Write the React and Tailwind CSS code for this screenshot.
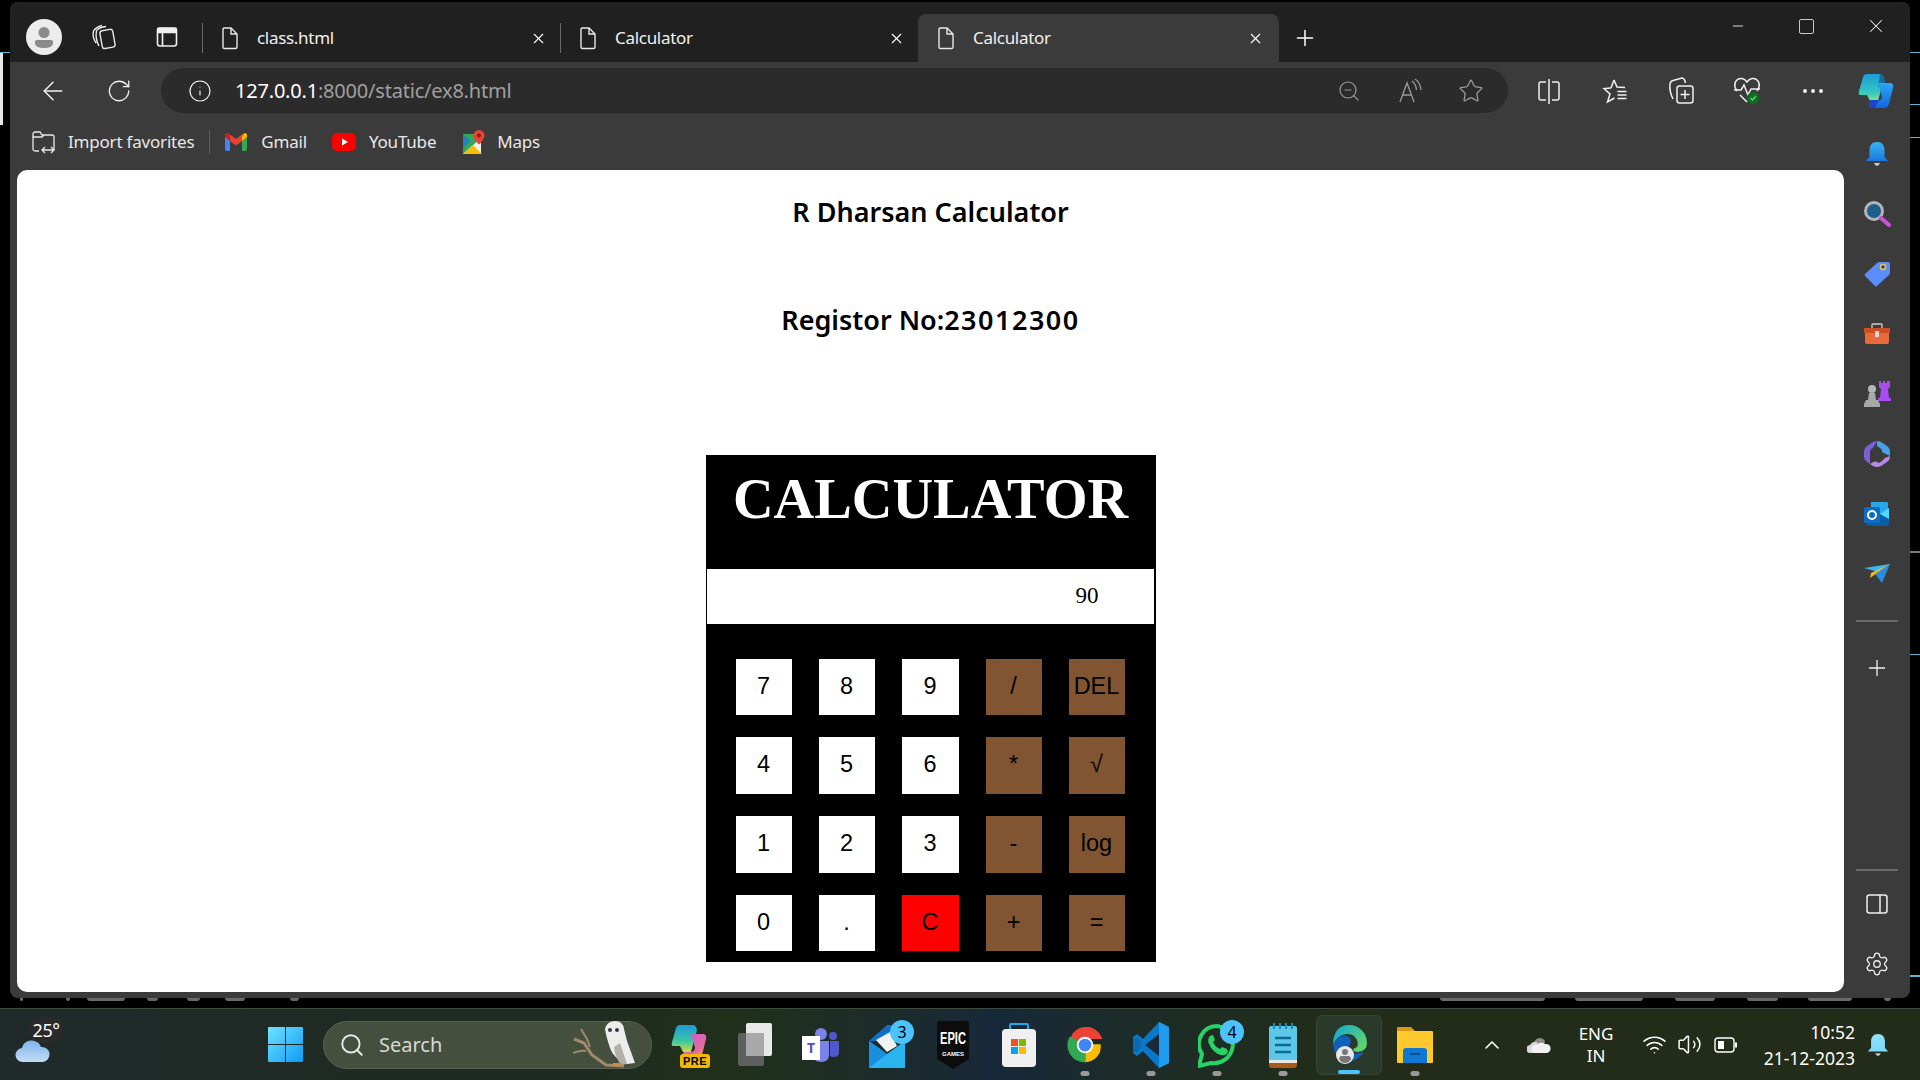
import { ArrowLeft, RotateCw, Info, ZoomOut, Star, Plus, X, Minus, ChevronUp, Wifi, Volume2, Settings, Search } from 'lucide-react';

const keys = [
  ['7', 'n'], ['8', 'n'], ['9', 'n'], ['/', 'o'], ['DEL', 'o'],
  ['4', 'n'], ['5', 'n'], ['6', 'n'], ['*', 'o'], ['√', 'o'],
  ['1', 'n'], ['2', 'n'], ['3', 'n'], ['-', 'o'], ['log', 'o'],
  ['0', 'n'], ['.', 'n'], ['C', 'r'], ['+', 'o'], ['=', 'o'],
];

const keyColors = {
  n: 'bg-white',
  o: 'bg-[#815532]',
  r: 'bg-[#ff0000]',
};

// bits of the window behind the browser that peek out under it: [gap before, width]
const statusMarks = [
  [20, 3], [43, 4], [17, 38], [22, 11], [29, 13], [25, 20], [45, 9],
  [1141, 105], [30, 68], [32, 40], [32, 31], [30, 44], [32, 7],
];

function PageIcon() {
  return (
    <svg width="18" height="24" viewBox="0 0 18 24" fill="none" stroke="#e8e8e8" strokeWidth="1.4">
      <path d="M3 2h7l6 6v13a1.5 1.5 0 0 1-1.5 1.5h-11A1.5 1.5 0 0 1 2 21V3.5A1.5 1.5 0 0 1 3 2zM10 2v6h6" />
    </svg>
  );
}

function Tab({ title, active, width, divider }) {
  return (
    <div className={`flex items-center h-12 pl-[19px] shrink-0 rounded-t-lg relative ${active ? 'bg-[#3b3b3b] pr-[15px]' : 'pr-[13px]'}`} style={{ width }}>
      {divider && <div className="absolute left-0 top-[9px] h-[30px] w-px bg-[#6a6a6a]" />}
      <PageIcon />
      <span className="ml-[18px] text-[17px] text-[#f0f0f0] flex-1 tracking-[-0.3px]">{title}</span>
      <X size={17} strokeWidth={1.5} color="#fff" />
    </div>
  );
}

function Avatar() {
  return (
    <svg width="36" height="36" viewBox="0 0 36 36">
      <circle cx="18" cy="18" r="18" fill="#ececec" />
      <circle cx="18" cy="13.5" r="5.5" fill="#8a8a8a" />
      <path d="M9 22.5q0-1.5 2-1.5h14q2 0 2 1.5v2q-1 4.5-9 4.5t-9-4.5z" fill="#8a8a8a" />
    </svg>
  );
}

function Workspaces() {
  return (
    <svg width="26" height="26" viewBox="0 0 26 26" fill="none" stroke="#e8e8e8" strokeWidth="1.4">
      <rect x="10" y="6" width="13" height="18" rx="2.5" transform="rotate(-10 16 15)" />
      <path d="M8 22Q4 15 5.5 6.5 9 3 15 2.5M5 19Q1 13 2.5 7 5 3 11 1.5" />
    </svg>
  );
}

function VerticalTabs() {
  return (
    <svg width="22" height="22" viewBox="0 0 22 22" fill="none" stroke="#f0f0f0" strokeWidth="1.6">
      <rect x="1.5" y="2" width="19" height="18" rx="2.5" />
      <path d="M6.5 6.5V20" />
      <path d="M2 2.5h18v4H2z" fill="#f0f0f0" />
    </svg>
  );
}

function SplitIcon() {
  return (
    <svg width="24" height="26" viewBox="0 0 24 26" fill="none" stroke="#f0f0f0" strokeWidth="1.5">
      <path d="M9 4H4a2 2 0 0 0-2 2v14a2 2 0 0 0 2 2h5M15 4h5a2 2 0 0 1 2 2v14a2 2 0 0 1-2 2h-5M12 1v25" />
    </svg>
  );
}

function FavList() {
  return (
    <svg width="26" height="26" viewBox="0 0 26 26" fill="none" stroke="#f0f0f0" strokeWidth="1.5">
      <path d="M12 2l3 7 8 .5M9 10l-7 .5 6 5.5-2.5 8 7-4M15.5 13.5h9M15.5 17h9M15.5 20.5h9" />
      <path d="M12 2L9 10" />
    </svg>
  );
}

function Collections() {
  return (
    <svg width="26" height="28" viewBox="0 0 26 28" fill="none" stroke="#f0f0f0" strokeWidth="1.5">
      <path d="M5 22Q1 14 2 7q.5-3 3-3.500L14 1q2 0 3 3l.5 2" />
      <rect x="9" y="9" width="16" height="17" rx="2.500" />
      <path d="M17 13v9M12.500 17.500h9" />
    </svg>
  );
}

function Health() {
  return (
    <svg width="28" height="30" viewBox="0 0 28 30" fill="none">
      <path d="M4 15Q1 11 2 7q2-5 7-4.500 3 .5 5 3.500 2-3 5-3.500 5-.5 7 4.500 1 4-2 8" stroke="#f0f0f0" strokeWidth="1.5" />
      <path d="M1 14h7l3-5 4 10 3-6h9M7 19l7 7" stroke="#f0f0f0" strokeWidth="1.5" />
      <circle cx="20" cy="22" r="6" fill="#0c6f1f" />
      <path d="M17.500 22l2 2 3.500-4" stroke="#6fcf7f" strokeWidth="1.2" />
    </svg>
  );
}

function Copilot({ size = 36 }) {
  return (
    <svg width={size} height={size} viewBox="0 0 36 36">
      <defs>
        <linearGradient id="cpA" x1="0" y1="0" x2="0" y2="1">
          <stop offset="0" stopColor="#1c9bd8" />
          <stop offset="0.7" stopColor="#35c9c0" />
          <stop offset="1" stopColor="#8ee08a" />
        </linearGradient>
        <linearGradient id="cpB" x1="0" y1="0" x2="0" y2="1">
          <stop offset="0" stopColor="#2aa8f2" />
          <stop offset="1" stopColor="#1464e0" />
        </linearGradient>
      </defs>
      <path d="M9 1h13q3 0 4 5l-6 22H12l-3-6H2q-2 0-1-4l4-14q1-3 4-3z" fill="url(#cpA)" />
      <path d="M22 1q3 0 4 5l2 5-8 3z" fill="#11719e" />
      <path d="M20 10h13q3 1 2 5l-4 16q-1 3-4 4H14q-3-1-3-4l2-3h7q3 0 4-4z" fill="url(#cpB)" />
      <path d="M12 27h9l-4 8h-3q-3-1-3-3z" fill="#1846c8" />
    </svg>
  );
}

function ImportFav() {
  return (
    <svg width="24" height="24" viewBox="0 0 24 24" fill="none" stroke="#e8e8e8" strokeWidth="1.3">
      <path d="M7 21H3a2 2 0 0 1-2-2V4a2 2 0 0 1 2-2h5l2 3h10a2 2 0 0 1 2 2v12a2 2 0 0 1-1 1.500M1 7h9l2-2" />
      <path d="M10 20h12M13 17l-3 3 3 3M19 17l3 3-3 3" />
    </svg>
  );
}

function Gmail() {
  return (
    <svg width="22" height="18" viewBox="0 0 22 18">
      <path d="M0 3v13a2 2 0 0 0 2 2h3V8z" fill="#4285f4" />
      <path d="M22 3v13a2 2 0 0 1-2 2h-3V8z" fill="#34a853" />
      <path d="M0 3q0-3 3-3l8 6 8-6q3 0 3 3v1l-5 4-6 4.500L5 8 0 4z" fill="#ea4335" />
      <path d="M17 3l3-3q2 0 2 3v1l-5 4z" fill="#fbbc04" />
      <path d="M0 4V3q0-3 3-3l2 1.500V8z" fill="#c5221f" />
    </svg>
  );
}

function YouTube() {
  return (
    <svg width="24" height="18" viewBox="0 0 24 18">
      <rect width="24" height="18" rx="5" fill="#ff0000" />
      <path d="M10 5.500l6 3.500-6 3.500z" fill="#fff" />
    </svg>
  );
}

function Maps() {
  return (
    <svg width="22" height="24" viewBox="0 0 22 24">
      <path d="M0 4h18v20H0z" fill="#34a853" />
      <path d="M0 24L18 8v16z" fill="#f2f2f2" />
      <path d="M0 24L10 15l9 9z" fill="#fbbc04" />
      <path d="M0 18L8 11 0 4z" fill="#1a73e8" opacity="0.7" />
      <path d="M16 0a5.500 5.500 0 0 1 5.500 5.500c0 4-5.500 9-5.500 9s-5.500-5-5.500-9A5.500 5.500 0 0 1 16 0z" fill="#ea4335" />
      <circle cx="16" cy="5.500" r="2" fill="#8c1a12" />
    </svg>
  );
}

// edge sidebar icons
function SideBell({ size = 26, top = '#37b5f2', bottom = '#1a78e0' }) {
  return (
    <svg width={size} height={size} viewBox="0 0 26 26">
      <defs>
        <linearGradient id={`bell${size}`} x1="0" y1="0" x2="0" y2="1">
          <stop offset="0" stopColor={top} />
          <stop offset="1" stopColor={bottom} />
        </linearGradient>
      </defs>
      <path d="M13 1c5 0 7.500 3.500 7.500 8v7l3.500 4H2l3.500-4V9C5.500 4.500 8 1 13 1z" fill={`url(#bell${size})`} />
      <path d="M10 22h6q-1 3-3 3t-3-3z" fill="#c8c8c8" />
    </svg>
  );
}

function SideSearch() {
  return (
    <svg width="28" height="28" viewBox="0 0 28 28" fill="none">
      <circle cx="11" cy="11" r="8.500" fill="#1c5f8e" stroke="#b5b5b5" strokeWidth="3" />
      <path d="M18 18l8 7" stroke="#c94fdc" strokeWidth="4" strokeLinecap="round" />
    </svg>
  );
}

function SideTag() {
  return (
    <svg width="26" height="26" viewBox="0 0 26 26">
      <path d="M15 1h9q2 0 2 2v9q0 1-1 2L13 25q-1 1-2 0L1 15q-1-1 0-2L13 2q1-1 2-1z" fill="#5b8cf7" />
      <circle cx="19" cy="6" r="2.500" fill="#1f3fa8" stroke="#f4c927" strokeWidth="1.500" />
    </svg>
  );
}

function SideTools() {
  return (
    <svg width="28" height="22" viewBox="0 0 28 22">
      <path d="M9 5V2q0-1 1-1h8q1 0 1 1v3" fill="none" stroke="#aaa" strokeWidth="1.800" />
      <path d="M1 5h26v5H1z" fill="#cf4e1f" />
      <path d="M2 10h24v9q0 2-2 2H4q-2 0-2-2z" fill="#e8693a" />
      <rect x="12" y="8" width="4" height="6" fill="#d8d8d8" />
    </svg>
  );
}

function SideGames() {
  return (
    <svg width="28" height="28" viewBox="0 0 28 28">
      <path d="M16 1h2v2h2V1h2v2h2V1h3v6l-2 2 1 9h2v3H15v-3h2l1-9-2-2z" fill="#a84df0" />
      <circle cx="9" cy="9" r="4" fill="#b5b5b5" />
      <path d="M6 13h6l1 7h2l2 4v3H1v-3l2-4h2z" fill="#a8a8a8" />
    </svg>
  );
}

function SideM365() {
  return (
    <svg width="26" height="26" viewBox="0 0 26 26">
      <path d="M13 0q2 0 4 1l6 4q3 2 3 5v5l-8-4v-1q0-2-2-3l-3-2z" fill="#4aa0e6" />
      <path d="M13 0q-2 0-4 1L3 5Q0 7 0 10v6q0 3 3 5l3 2V11q0-3 3-4z" fill="#7a5fd6" />
      <path d="M26 15v1q0 3-3 5l-6 4q-4 2-8 0l-3-2 5-3 4 2 3-2 3-3z" fill="#b58ae6" />
      <path d="M8 12l5-3 5 3v4l-8 5-2-1z" fill="#3b3b3b" />
    </svg>
  );
}

function SideOutlook() {
  return (
    <svg width="26" height="26" viewBox="0 0 26 26">
      <path d="M7 1h16a2 2 0 0 1 1 1v11H7z" fill="#28a8ea" />
      <path d="M3 24V13h22v10a2 2 0 0 1-2 2H5z" fill="#0a5ea8" />
      <path d="M16 13l9-6v11z" fill="#50d9ff" />
      <rect x="0" y="6" width="16" height="16" rx="1.500" fill="#0a6cc2" />
      <circle cx="8" cy="14" r="4" fill="none" stroke="#fff" strokeWidth="2" />
    </svg>
  );
}

function SideSend() {
  return (
    <svg width="28" height="22" viewBox="0 0 28 22">
      <path d="M1 5l26-4-8 9z" fill="#38b6f0" />
      <path d="M8 10l19-9L7 15z" fill="#f2b81c" />
      <path d="M12 11l15-10-8 19z" fill="#2a8ce0" />
    </svg>
  );
}

function SidePanelIcon() {
  return (
    <svg width="22" height="20" viewBox="0 0 22 20" fill="none" stroke="#f0f0f0" strokeWidth="1.500">
      <rect x="1" y="1" width="20" height="18" rx="2.500" />
      <path d="M14 1v18" />
    </svg>
  );
}

function Weather() {
  return (
    <svg width="36" height="28" viewBox="0 0 36 28">
      <defs>
        <linearGradient id="cloud" x1="0" y1="0" x2="0" y2="1">
          <stop offset="0" stopColor="#7db5ee" />
          <stop offset="1" stopColor="#c4dcf6" />
        </linearGradient>
      </defs>
      <path d="M8 27a7 7 0 0 1-1-14 10 10 0 0 1 19-1 7.500 7.500 0 0 1 2 15z" fill="url(#cloud)" />
    </svg>
  );
}

function WinLogo() {
  return (
    <svg width="35" height="35" viewBox="0 0 35 35">
      <defs>
        <linearGradient id="win" x1="0" y1="0" x2="1" y2="1">
          <stop offset="0" stopColor="#6fe3ff" />
          <stop offset="1" stopColor="#0f9bf5" />
        </linearGradient>
      </defs>
      <path d="M1 0h16v17H0V1q0-1 1-1zM18 0h16q1 0 1 1v16H18zM0 18h17v17H1q-1 0-1-1zM18 18h17v16q0 1-1 1H18z" fill="url(#win)" />
    </svg>
  );
}

function Owl() {
  return (
    <svg width="70" height="48" viewBox="0 0 70 48">
      <path d="M1 18l10 4 8 12 14 10 18 1" fill="none" stroke="#a08a6c" strokeWidth="3" />
      <path d="M8 8l6 10 3 8M0 32q8-3 13-2" fill="none" stroke="#a08a6c" strokeWidth="2" />
      <path d="M32 8q2-8 10-8t9 8l3 12 8 22-8 1q-14-6-17-16-4-12-5-19z" fill="#ececec" />
      <path d="M47 22l7 21-6 1q-6-8-7-18z" fill="#b4b0a8" />
      <circle cx="37" cy="9" r="2" fill="#3a3a44" />
      <circle cx="44" cy="9" r="2" fill="#3a3a44" />
      <path d="M40 42h9v3h-9z" fill="#d98a2c" />
    </svg>
  );
}

function CopilotPre() {
  return (
    <div className="relative w-[36px] h-[46px]">
      <svg width="36" height="40" viewBox="0 0 36 36">
        <defs>
          <linearGradient id="preA" x1="0" y1="0" x2="0" y2="1">
            <stop offset="0" stopColor="#1c9bd8" />
            <stop offset="0.6" stopColor="#3cc8a0" />
            <stop offset="1" stopColor="#d8d840" />
          </linearGradient>
          <linearGradient id="preB" x1="0" y1="0" x2="1" y2="1">
            <stop offset="0" stopColor="#c05ad8" />
            <stop offset="0.6" stopColor="#e068a8" />
            <stop offset="1" stopColor="#f2a03c" />
          </linearGradient>
        </defs>
        <path d="M9 1h13q3 0 4 5l-6 22H12l-3-6H2q-2 0-1-4l4-14q1-3 4-3z" fill="url(#preA)" />
        <path d="M20 10h13q3 1 2 5l-4 16q-1 3-4 4H14q-3-1-3-4l2-3h7q3 0 4-4z" fill="url(#preB)" />
      </svg>
      <span className="absolute bottom-0 right-[-3px] bg-[#f5b800] text-black font-bold rounded-[3px] text-[11px] leading-[14px] px-[3px] tracking-[0.5px] font-['Liberation_Sans',sans-serif]">PRE</span>
    </div>
  );
}

function TaskView() {
  return (
    <svg width="36" height="46" viewBox="0 0 36 46">
      <rect x="1" y="11" width="26" height="33" rx="2" fill="#5f5f5f" />
      <rect x="9" y="1" width="26" height="33" rx="2" fill="#e8e8e8" />
      <path d="M9 11h18v23H9z" fill="#a8a8a8" />
    </svg>
  );
}

function Teams() {
  return (
    <svg width="36" height="34" viewBox="0 0 36 34">
      <circle cx="18" cy="6" r="6" fill="#7b83eb" />
      <circle cx="30" cy="8" r="4" fill="#5059c9" />
      <path d="M10 13h16v14q0 7-8 7t-8-7z" fill="#7b83eb" />
      <path d="M27 13h9v11q0 5-5 5-3 0-4-1z" fill="#5059c9" />
    </svg>
  );
}

function Mail() {
  return (
    <svg width="36" height="46" viewBox="0 0 36 46">
      <path d="M0 19L18 3h3q15 6 15 16z" fill="#0f6fc6" />
      <path d="M7 18l14-8 7 14-10 6z" fill="#f1f1f1" />
      <path d="M0 19l18 13 18-13v27H0z" fill="#2bb4f0" />
      <path d="M0 19l18 13-18 14z" fill="#1a8fe0" />
    </svg>
  );
}

function Epic() {
  return (
    <svg width="32" height="48" viewBox="0 0 32 48">
      <path d="M3 0h26q3 0 3 3v35l-16 10L0 38V3q0-3 3-3z" fill="#0c0c0c" />
      <text x="16" y="23" textAnchor="middle" fill="#fff" fontSize="16" fontWeight="700" fontFamily="Liberation Sans" textLength="26" lengthAdjust="spacingAndGlyphs">EPIC</text>
      <text x="16" y="35" textAnchor="middle" fill="#fff" fontSize="6" fontWeight="700" fontFamily="Liberation Sans">GAMES</text>
    </svg>
  );
}

function Store() {
  return (
    <svg width="36" height="46" viewBox="0 0 36 46">
      <path d="M9 7V3q0-1 1-1h16q1 0 1 1v4" fill="none" stroke="#27a5e8" strokeWidth="2" />
      <rect x="1" y="7" width="34" height="38" rx="4" fill="#f0f0f0" />
      <rect x="10" y="17" width="7" height="7" fill="#f25022" />
      <rect x="18" y="17" width="7" height="7" fill="#7fba00" />
      <rect x="10" y="25" width="7" height="7" fill="#00a4ef" />
      <rect x="18" y="25" width="7" height="7" fill="#ffb900" />
    </svg>
  );
}

function Chrome() {
  return (
    <svg width="36" height="36" viewBox="0 0 48 48">
      <path d="M24 24L7 14A20 20 0 0 1 44 14H24z" fill="#ea4335" stroke="#ea4335" strokeWidth="4" />
      <path d="M24 24H44A20 20 0 0 1 24 46z" fill="#fbbc04" stroke="#fbbc04" strokeWidth="2" />
      <path d="M24 24V46A22 22 0 0 1 4 14z" fill="#34a853" stroke="#34a853" strokeWidth="2" />
      <circle cx="24" cy="24" r="11" fill="#fff" />
      <circle cx="24" cy="24" r="8.500" fill="#4285f4" />
    </svg>
  );
}

function VsCode() {
  return (
    <svg width="36" height="46" viewBox="0 0 36 46">
      <path d="M26 0l10 5v36l-10 5L10 29 4 34 0 31v-16l4-3 6 5z" fill="#0a78c8" />
      <path d="M26 0l10 5v36l-10 5z" fill="#1f9cf0" />
      <path d="M26 12v22L12 23z" fill="#1a2a3a" />
      <path d="M0 17l4-2 5 8-5 8-4-2z" fill="#0a6ab0" />
    </svg>
  );
}

function WhatsApp() {
  return (
    <svg width="38" height="46" viewBox="0 0 38 46">
      <path d="M19 4a18 18 0 0 0-15 28L1 44l12-3A18 18 0 1 0 19 4z" fill="none" stroke="#25d366" strokeWidth="4" />
      <path d="M12 14q-3 3-1 8 4 9 12 11 5 1 7-3l-1-3-5-2-2 2q-5-2-7-7l2-2-2-5z" fill="#25d366" />
    </svg>
  );
}

function Notepad() {
  return (
    <svg width="30" height="46" viewBox="0 0 30 46">
      <rect x="1" y="4" width="28" height="38" rx="2" fill="#5cc8e8" />
      <path d="M1 38h28v5q0 3-3 3H4q-3 0-3-3z" fill="#a85a1c" />
      <path d="M1 38h28v3H1z" fill="#e8e8e8" />
      <path d="M7 16h16M7 23h16M7 30h16" stroke="#0c6a92" strokeWidth="2.500" />
      <path d="M6 1v6M12 1v6M18 1v6M24 1v6" stroke="#1b8cb8" strokeWidth="2" />
    </svg>
  );
}

function Edge() {
  return (
    <svg width="36" height="44" viewBox="0 0 36 44">
      <defs>
        <linearGradient id="edgeA" x1="0" y1="0" x2="1" y2="0.6">
          <stop offset="0" stopColor="#0ea5d8" />
          <stop offset="1" stopColor="#5fd36e" />
        </linearGradient>
      </defs>
      <path d="M18 2a18 18 0 0 1 18 18q0 8-9 9-5 0-5-3 7-2 4-9-3-7-11-6-8 1-13 10Q3 2 18 2z" fill="url(#edgeA)" />
      <path d="M2 21q6-10 14-8 6 3 3 8-3 6 4 10l10-2q-6 9-15 9Q4 38 2 21z" fill="#0f60b8" />
      <circle cx="14" cy="32" r="9" fill="#e8e8e8" />
      <circle cx="14" cy="29" r="3" fill="#777" />
      <path d="M8 36q0-3 3-3h6q3 0 3 3-2 4-6 4t-6-4z" fill="#777" />
    </svg>
  );
}

function Folder() {
  return (
    <svg width="36" height="40" viewBox="0 0 36 40">
      <path d="M1 2h13l4 4v6H0V3q0-1 1-1z" fill="#d79a12" />
      <path d="M0 6h35q1 0 1 1v30q0 1-1 1H1q-1 0-1-1z" fill="#ffc82c" />
      <path d="M6 38V26q0-3 3-3h18q3 0 3 3v12z" fill="#1078d2" />
      <path d="M13 29h10" stroke="#0a4f90" strokeWidth="2" />
    </svg>
  );
}

function OneDrive() {
  return (
    <svg width="24" height="16" viewBox="0 0 24 16">
      <path d="M7 6a6 6 0 0 1 11-2 5 5 0 0 1-1 3z" fill="#8c8c8c" />
      <path d="M4 16a4 4 0 0 1-1-8 7 7 0 0 1 7-3l4 11z" fill="#d8d8d8" />
      <path d="M8 16a4 4 0 0 1 1-8 7 7 0 0 1 9-1 4.500 4.500 0 0 1 2 9z" fill="#f2f2f2" />
    </svg>
  );
}

function Battery() {
  return (
    <svg width="24" height="18" viewBox="0 0 24 18" fill="none">
      <rect x="1" y="2" width="19" height="14" rx="3" stroke="#fff" strokeWidth="1.400" />
      <rect x="4" y="5" width="6" height="8" fill="#fff" />
      <path d="M22 6.500v5" stroke="#fff" strokeWidth="2" />
    </svg>
  );
}

function ToolbarBtn({ children, w = 'w-[66px]' }) {
  return <div className={`${w} h-full flex items-center justify-center shrink-0`}>{children}</div>;
}

function Badge({ n }) {
  return (
    <span className="absolute top-[5px] right-[6px] w-6 h-6 rounded-full bg-[#4cc2ff] text-black text-[16px] flex items-center justify-center">{n}</span>
  );
}

function TaskIcon({ children, running, active, badge }) {
  return (
    <div className={`relative w-[66px] h-[60px] flex items-center justify-center shrink-0 rounded-md ${active ? 'bg-[#2a3a2a] border border-[#364636]' : ''}`}>
      <div className="relative flex items-center justify-center">
        {children}
      </div>
      {badge && <Badge n={badge} />}
      {running && !active && <span className="absolute bottom-[-1px] left-1/2 -translate-x-1/2 w-[9px] h-[5px] rounded-full bg-[#9a9a9a]" />}
      {active && <span className="absolute bottom-0 left-1/2 -translate-x-1/2 w-[22px] h-[4px] rounded-full bg-[#4cc2ff]" />}
    </div>
  );
}

function Calculator() {
  return (
    <div className="w-[450px] h-[507px] bg-black mx-auto flex flex-col font-['Liberation_Serif',serif]">
      <h1 className="text-center text-white font-bold text-[56.3px] leading-[66px] mt-[11px] h-[103px]">CALCULATOR</h1>
      <div className="ml-px w-[447px] h-[55px] bg-white flex items-center justify-end pr-[55px] pb-[1px] text-[23px] text-black">
        <span>90</span>
      </div>
      <div className="grid grid-cols-[56px_56px_57px_56px_56px] grid-rows-[56px_57px_57px_56px] gap-x-[27px] gap-y-[22px] ml-[30px] mt-[35px] font-['Liberation_Sans',sans-serif]">
        {keys.map(([label, kind]) => (
          <button key={label} className={`${keyColors[kind]} text-black text-[23.5px] pb-[1px] flex items-center justify-center`}>{label}</button>
        ))}
      </div>
    </div>
  );
}

export default function App() {
  return (
    <div className="w-[1920px] h-[1080px] bg-black overflow-hidden flex flex-col relative font-['Noto_Sans',sans-serif]">
      {/* window edges peeking out from behind the browser */}
      <div className="absolute left-0 top-[52px] w-[10px] h-px bg-[#5fb4d0]" />
      <div className="absolute left-0 top-[53px] w-[3px] h-[72px] bg-[#e8e8e8]" />
      <div className="absolute right-0 top-[52px] w-[10px] h-px bg-[#5fb4d0]" />
      <div className="absolute right-0 top-[104px] w-[10px] h-px bg-[#5fb4d0]" />
      <div className="absolute right-0 top-[137px] w-[10px] h-px bg-[#5fb4d0]" />
      <div className="absolute right-0 top-[551px] w-[10px] h-[2px] bg-[#7a7a7a]" />
      <div className="absolute right-0 top-[654px] w-[10px] h-px bg-[#5fb4d0]" />
      <div className="absolute right-0 top-[975px] w-[10px] h-[2px] bg-[#5fb4d0]" />

      <div className="h-[1008px] pt-[2px] pl-[10px] pr-[10px] shrink-0 flex flex-col relative">
        <div className="w-[1900px] h-[996px] rounded-lg overflow-hidden flex flex-col bg-[#3b3b3b] shrink-0">
          {/* title bar */}
          <div className="h-[60px] bg-[#202020] flex items-end shrink-0">
            <div className="w-[192px] h-[60px] flex items-center pl-[16px] pt-[10px] shrink-0">
              <Avatar />
              <div className="ml-[29px]"><Workspaces /></div>
              <div className="ml-[39px]"><VerticalTabs /></div>
            </div>
            <Tab title="class.html" width={358} divider />
            <Tab title="Calculator" width={358} divider />
            <Tab title="Calculator" active width={361} />
            <div className="w-[52px] h-12 flex items-center justify-center shrink-0">
              <Plus size={26} strokeWidth={1.4} color="#fff" />
            </div>
            <div className="flex-1" />
            <div className="flex h-[60px] pt-[6px] items-start">
              <div className="w-[69px] h-9 flex items-center justify-center"><Minus size={16} strokeWidth={1.4} color="#e8e8e8" /></div>
              <div className="w-[69px] h-9 flex items-center justify-center"><div className="w-[15px] h-[15px] border border-[#c8c8c8] rounded-[2px]" /></div>
              <div className="w-[69px] h-9 flex items-center justify-center"><X size={22} strokeWidth={1.1} color="#f0f0f0" /></div>
            </div>
          </div>

          {/* address bar */}
          <div className="h-[51px] flex items-end shrink-0 pl-[10px] pr-[10px]">
            <div className="h-[45px] flex shrink-0">
              <ToolbarBtn><ArrowLeft size={30} strokeWidth={1.2} color="#f0f0f0" /></ToolbarBtn>
              <ToolbarBtn><RotateCw size={26} strokeWidth={1.2} color="#f0f0f0" /></ToolbarBtn>
            </div>
            <div className="ml-[9px] w-[1347px] h-[45px] rounded-full bg-[#2b2b2b] flex items-center shrink-0">
              <div className="ml-[27px]"><Info size={24} strokeWidth={1.2} color="#f0f0f0" /></div>
              <div className="ml-[23px] text-[20px] tracking-[-0.2px]">
                <span className="text-white">127.0.0.1</span><span className="text-[#a0a0a0]">:8000/static/ex8.html</span>
              </div>
              <div className="flex-1" />
              <div className="w-[61px] flex justify-center"><ZoomOut size={24} strokeWidth={1.2} color="#9a9a9a" /></div>
              <div className="w-[61px] flex justify-center">
                <svg width="26" height="26" viewBox="0 0 26 26" fill="none" stroke="#9a9a9a" strokeWidth="1.300">
                  <path d="M3 24L10 5l7 19M5.500 17h9M15 3q4 3 4.500 9M18 1q5 3 6 11" />
                </svg>
              </div>
              <div className="w-[61px] flex justify-center"><Star size={26} strokeWidth={1.2} color="#9a9a9a" /></div>
              <div className="w-[7px]" />
            </div>
            <div className="h-[45px] flex ml-[8px]">
              <ToolbarBtn><SplitIcon /></ToolbarBtn>
              <ToolbarBtn><FavList /></ToolbarBtn>
              <ToolbarBtn><Collections /></ToolbarBtn>
              <ToolbarBtn><Health /></ToolbarBtn>
              <ToolbarBtn>
                <div className="flex gap-[4px]">
                  <span className="w-[4px] h-[4px] rounded-full bg-[#f0f0f0]" />
                  <span className="w-[4px] h-[4px] rounded-full bg-[#f0f0f0]" />
                  <span className="w-[4px] h-[4px] rounded-full bg-[#f0f0f0]" />
                </div>
              </ToolbarBtn>
              <ToolbarBtn><div className="-ml-[6px]"><Copilot /></div></ToolbarBtn>
            </div>
          </div>

          {/* favorites */}
          <div className="h-[57px] flex items-center pl-[22px] text-[17px] text-[#e8e8e8] shrink-0 tracking-[-0.2px]">
            <ImportFav />
            <span className="ml-[12px]">Import favorites</span>
            <div className="w-px h-[24px] bg-[#5f5f5f] ml-[15px] mr-[15px]" />
            <Gmail />
            <span className="ml-[14px]">Gmail</span>
            <div className="ml-[25px]"><YouTube /></div>
            <span className="ml-[13px]">YouTube</span>
            <div className="ml-[27px]"><Maps /></div>
            <span className="ml-[12px]">Maps</span>
          </div>

          {/* content + sidebar */}
          <div className="flex-1 flex min-h-0">
            <div className="w-[1827px] ml-[7px] h-[822px] bg-white rounded-[10px] overflow-hidden shrink-0 flex flex-col">
              <h2 className="text-center text-black font-semibold text-[27px] leading-[36px] mt-[24px]">R Dharsan Calculator</h2>
              <h2 className="text-center text-black font-semibold text-[27px] leading-[36px] mt-[72px]">Registor No:<span className="tracking-[1.5px]">23012300</span></h2>
              <div className="mt-[117px]">
                <Calculator />
              </div>
            </div>
            <div className="flex-1 flex flex-col items-center">
              <div className="h-[60px] -mt-[46px] flex items-center shrink-0"><SideBell /></div>
              <div className="h-[60px] flex items-center shrink-0"><SideSearch /></div>
              <div className="h-[60px] flex items-center shrink-0"><SideTag /></div>
              <div className="h-[60px] flex items-center shrink-0"><SideTools /></div>
              <div className="h-[60px] flex items-center shrink-0"><SideGames /></div>
              <div className="h-[60px] flex items-center shrink-0"><SideM365 /></div>
              <div className="h-[60px] flex items-center shrink-0"><SideOutlook /></div>
              <div className="h-[60px] flex items-center shrink-0"><SideSend /></div>
              <div className="w-[42px] h-[2px] bg-[#6a6a6a] mt-[16px] shrink-0" />
              <div className="mt-[33px]"><Plus size={26} strokeWidth={1.2} color="#f0f0f0" /></div>
              <div className="flex-1" />
              <div className="w-[42px] h-[2px] bg-[#6a6a6a] shrink-0" />
              <div className="mt-[23px]"><SidePanelIcon /></div>
              <div className="mt-[37px] mb-[21px]"><Settings size={26} strokeWidth={1.2} color="#f0f0f0" /></div>
            </div>
          </div>
        </div>
        {/* faint status bar of the window behind */}
        <div className="flex -ml-[10px] shrink-0">
          {statusMarks.map(([gap, width], i) => (
            <span key={i} className="h-[3px] bg-[#6a6a6a] rounded-b-sm shrink-0" style={{ marginLeft: gap, width }} />
          ))}
        </div>
      </div>

      {/* taskbar */}
      <div className="h-[72px] border-t border-[#3f4a3f] flex items-center relative bg-[linear-gradient(90deg,#202a2a_0%,#1f2a22_30%,#20301a_38%,#1c2c2a_46%,#17283a_52%,#1c2c2a_58%,#222c18_70%,#222c18_100%)] text-white">
        <div className="w-[60px] ml-[15px] relative shrink-0 h-full flex items-end pb-[17px]">
          <Weather />
          <span className="absolute left-[14px] top-[8px] w-[34px] h-[26px] rounded-full bg-[#2a2a2a] text-[18px] flex items-center justify-center tracking-[-0.5px]">25°</span>
        </div>
        <div className="ml-[193px]"><WinLogo /></div>
        <div className="ml-[20px] w-[329px] h-[48px] rounded-full bg-[#454f3d] border border-[#5a6352] flex items-center pl-[15px] shrink-0">
          <Search size={26} strokeWidth={1.8} color="#e8e8e8" />
          <span className="ml-[14px] text-[20px] text-[#d8d8d8]">Search</span>
          <div className="flex-1" />
          <Owl />
          <div className="w-[8px]" />
        </div>
        <div className="flex ml-[4px] items-center">
          <TaskIcon><CopilotPre /></TaskIcon>
          <TaskIcon><TaskView /></TaskIcon>
          <TaskIcon><Teams /><span className="absolute left-[-1px] top-[8px] w-[18px] h-[24px] bg-white text-[#4b53bc] text-[14px] font-bold flex items-center justify-center">T</span></TaskIcon>
          <TaskIcon badge="3"><Mail /></TaskIcon>
          <TaskIcon><Epic /></TaskIcon>
          <TaskIcon><Store /></TaskIcon>
          <TaskIcon running><Chrome /></TaskIcon>
          <TaskIcon running><VsCode /></TaskIcon>
          <TaskIcon running badge="4"><WhatsApp /></TaskIcon>
          <TaskIcon running><Notepad /></TaskIcon>
          <TaskIcon active><Edge /></TaskIcon>
          <TaskIcon running><Folder /></TaskIcon>
        </div>
        <div className="flex-1" />
        <div className="flex items-center h-full pr-[30px]">
          <ChevronUp size={24} strokeWidth={1.6} color="#fff" />
          <div className="ml-[23px]"><OneDrive /></div>
          <div className="ml-[25px] w-[40px] text-center text-[17px] leading-[22px]">ENG<br />IN</div>
          <div className="ml-[26px]"><Wifi size={25} strokeWidth={1.5} color="#fff" /></div>
          <div className="ml-[10px]"><Volume2 size={25} strokeWidth={1.4} color="#fff" /></div>
          <div className="ml-[12px]"><Battery /></div>
          <div className="ml-[22px] text-right text-[17.5px] leading-[26px] w-[95px]">10:52<br />21-12-2023</div>
          <div className="ml-[11px]"><SideBell size={24} top="#8fe3ff" bottom="#7bd8fa" /></div>
        </div>
      </div>
    </div>
  );
}
